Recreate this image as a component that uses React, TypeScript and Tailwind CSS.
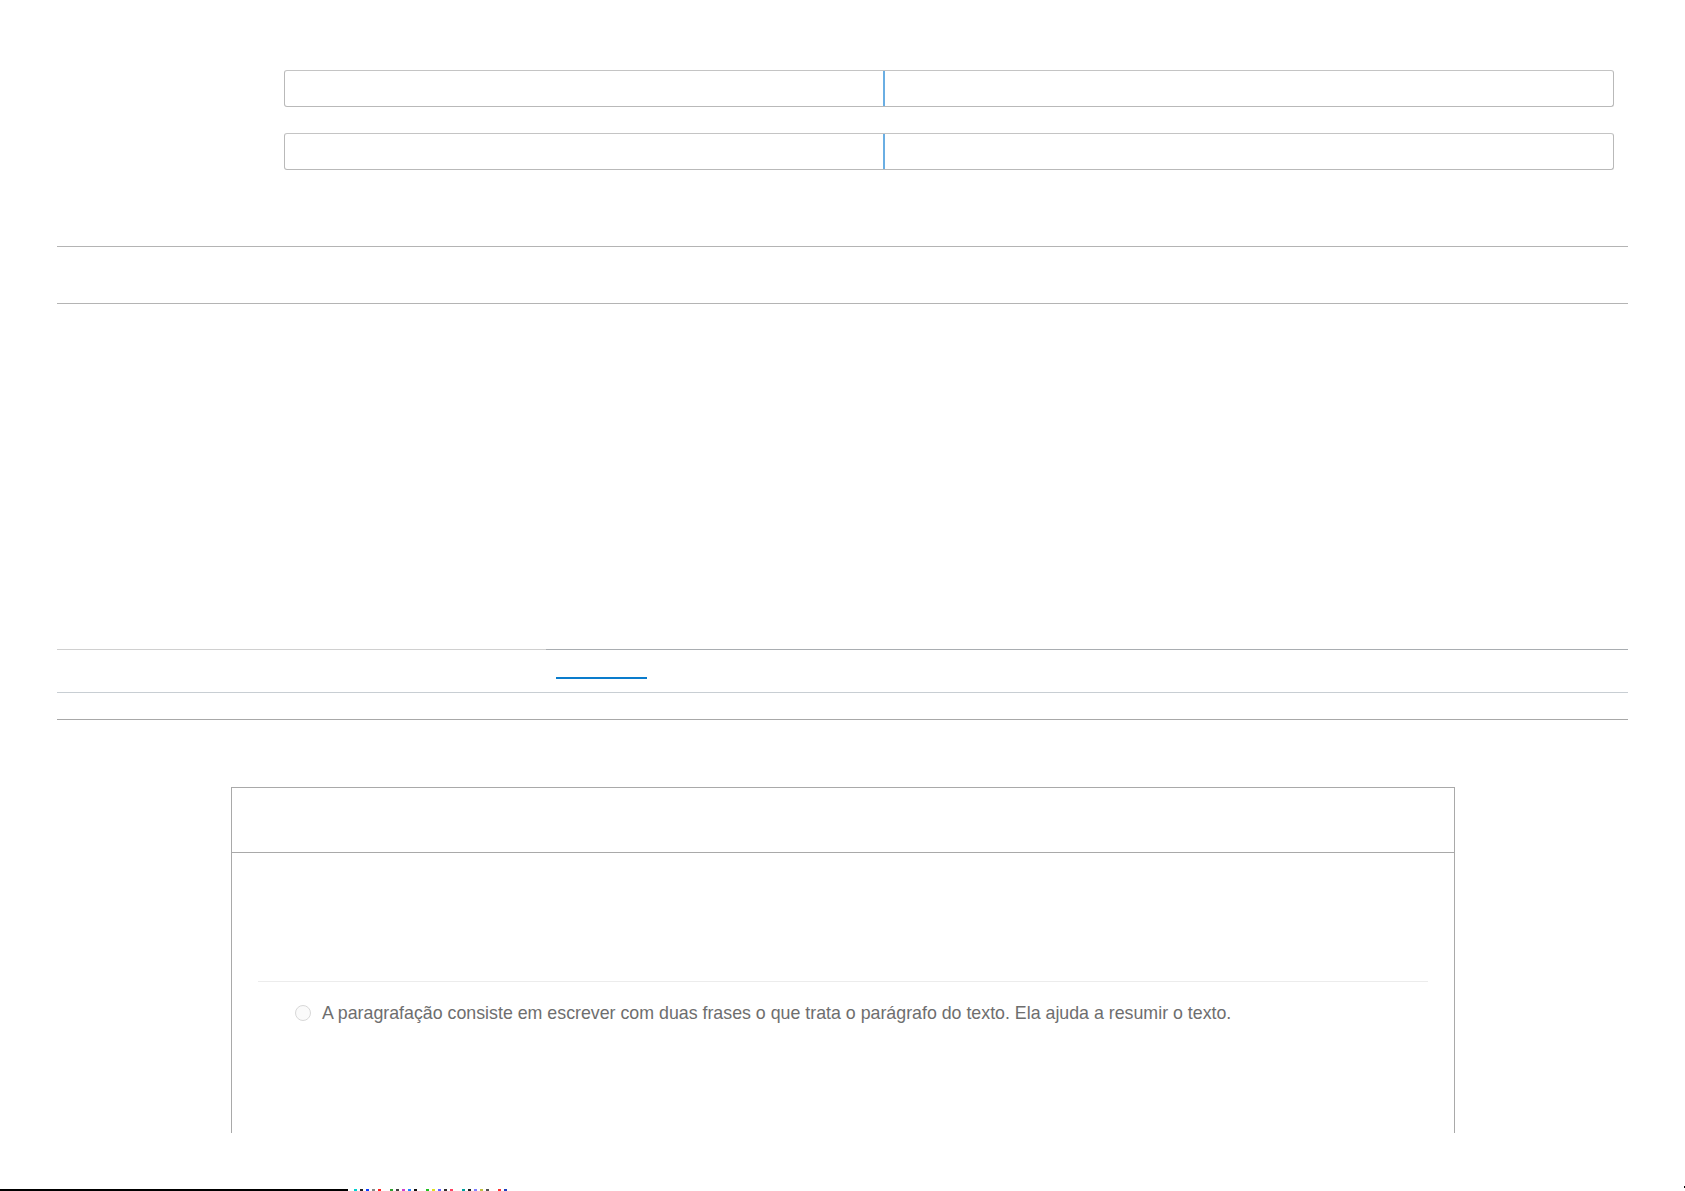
import React from "react";

function SplitField() {
  return (
    <div className="flex h-[37px] w-[1330px] overflow-hidden rounded-[3px] border border-[#b9b9b9] border-t-[#c4c4c4] bg-white">
      <div className="w-[600px] border-r-2 border-[#6aaee3]" />
      <div className="flex-1" />
    </div>
  );
}

function NoiseStrip() {
  const specks = [
    "#00d0d0", "#222", "#1040ff", "#888", "#ff2020", "#30a030", "#404040", "#d040d0",
    "#2080ff", "#111", "#20c020", "#e0e020", "#6060ff", "#303030", "#ff4060", "#00a0a0",
    "#202020", "#8080ff", "#c0c040", "#505050", "#ff3030", "#2040c0",
  ];
  return (
    <div className="flex h-[2px] items-end gap-[3px]">
      {specks.map((c, i) => (
        <span key={i} className="h-[2px] w-[3px]" style={{ backgroundColor: c, marginLeft: i % 5 === 0 ? 6 : 0 }} />
      ))}
    </div>
  );
}

export default function App() {
  return (
    <div className="relative h-[1191px] w-[1685px] overflow-hidden bg-white font-['Liberation_Sans',Arial,sans-serif]">
      {/* form fields */}
      <div className="flex flex-col gap-[26px] pl-[284px] pt-[70px]">
        <SplitField />
        <SplitField />
      </div>

      {/* rule block */}
      <div className="mx-[57px] mt-[76px] h-[1px] bg-[#b4b4b4]" />
      <div className="mx-[57px] mt-[56px] h-[1px] bg-[#b4b4b4]" />

      {/* tab strip */}
      <div className="mx-[57px] mt-[345px] flex h-[1px]">
        <div className="w-[489px] bg-[#d0d0d0]" />
        <div className="flex-1 bg-[#a9adb1]" />
      </div>
      <div className="mx-[57px] flex h-[42px] items-end pb-[13px]">
        <div className="ml-[499px] h-[2px] w-[91px] bg-[#0a7ccc]" />
      </div>
      <div className="mx-[57px] h-[1px] bg-[#c8ced3]" />
      <div className="mx-[57px] mt-[26px] h-[1px] bg-[#a8a8a8]" />

      {/* question card */}
      <div className="ml-[231px] mt-[67px] h-[346px] w-[1224px] border-x border-t border-[#a9a9a9]">
        <div className="h-[65px] border-b border-[#a9a9a9]" />
        <div className="px-[26px] pt-[128px]">
          <div className="h-[1px] bg-[#ececec]" />
          <label className="flex items-center gap-[11px] pl-[37px] pt-[20px]">
            <span className="h-[16px] w-[16px] shrink-0 rounded-full border border-[#d8d8d8] bg-[#fafafa]" />
            <span className="text-[17.8px] leading-[22px] text-[#6e6e6e]">
              A paragrafação consiste em escrever com duas frases o que trata o parágrafo do texto. Ela ajuda a resumir o texto.
            </span>
          </label>
        </div>
      </div>

      {/* bottom edge */}
      <div className="absolute bottom-0 left-0 flex items-end">
        <div className="h-[2px] w-[348px] bg-black" />
        <NoiseStrip />
      </div>
      <div className="absolute bottom-[3px] right-0 h-[2px] w-[1px] bg-black" />
    </div>
  );
}
